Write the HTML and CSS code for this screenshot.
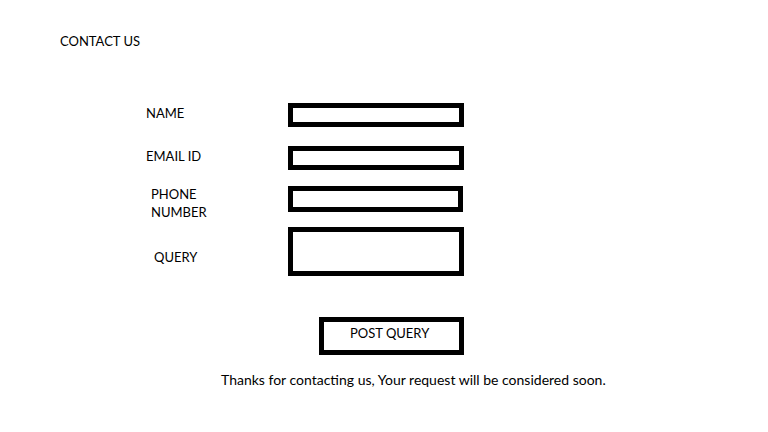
FILE: index.html
```html
<!DOCTYPE html>
<html lang="en">
<head>
<meta charset="utf-8">
<title>Contact Us</title>
<link rel="stylesheet" href="styles.css">
</head>
<body>
<main class="page">
  <h1 class="title">CONTACT US</h1>
  <form class="form">
    <div class="row row-name">
      <label class="label">NAME</label>
      <div class="field field-short"></div>
    </div>
    <div class="row row-email">
      <label class="label">EMAIL ID</label>
      <div class="field field-short"></div>
    </div>
    <div class="row row-phone">
      <label class="label">PHONE<br>NUMBER</label>
      <div class="field field-phone"></div>
    </div>
    <div class="row row-query">
      <label class="label">QUERY</label>
      <div class="field field-query"></div>
    </div>
    <div class="actions">
      <button type="button" class="submit">POST QUERY</button>
    </div>
    <p class="note">Thanks for contacting us, Your request will be considered soon.</p>
  </form>
</main>
</body>
</html>
```
FILE: styles.css
```css
* { box-sizing: border-box; }
html, body { margin: 0; padding: 0; background: #fff; }
body {
  font-family: Lato, "Open Sans", "Liberation Sans", sans-serif;
  font-size: 13px;
  color: #000;
  width: 768px;
  height: 432px;
  overflow: hidden;
}
.page {
  padding: 33px 0 0 60px;
}
.title {
  margin: 0;
  font-size: 13px;
  font-weight: normal;
  line-height: 16px;
}
.form {
  margin-top: 54px;
  padding-left: 86px;
  display: flex;
  flex-direction: column;
}
.row {
  display: flex;
  align-items: flex-start;
}
.label {
  width: 142px;
  line-height: 16px;
}
.field {
  width: 176px;
  border: 5px solid #000;
  background: #fff;
}
.field-short { height: 24px; }
.field-phone { height: 26px; width: 175px; }
.field-query { height: 49px; }
.row-name .label { padding-top: 2px; }
.row-email { margin-top: 19px; }
.row-email .label { padding-top: 2px; }
.row-phone { margin-top: 16px; }
.row-phone .label { margin-top: -1px; padding-left: 5px; line-height: 18px; }
.row-query { margin-top: 6px; }
.row-query .label { padding-top: 22px; padding-left: 8px; }
.actions {
  margin-top: 41px;
  padding-left: 173px;
}
.submit {
  display: block;
  width: 145px;
  height: 38px;
  margin: 0;
  padding: 0 0 6px 26px;
  border: 5px solid #000;
  background: #fff;
  font: inherit;
  line-height: 16px;
  text-align: left;
  color: #000;
}
.note {
  margin: 17px 0 0 75px;
  font-size: 14px;
  line-height: 16px;
}
```
